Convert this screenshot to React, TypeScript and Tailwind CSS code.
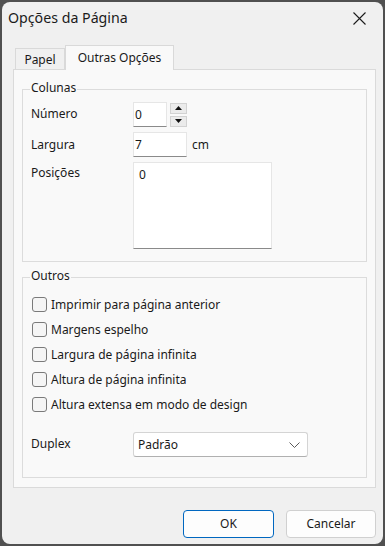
import React from "react";

function Group({ label, className, children }: { label: string; className?: string; children: React.ReactNode }) {
  return (
    <div className={`relative border border-[#dcdcdc] ${className ?? ""}`}>
      <span className="absolute -top-[10px] left-[7px] bg-[#f9f9f9] px-[1px] text-[12px] leading-[16px] text-[#1a1a1a]">
        {label}
      </span>
      {children}
    </div>
  );
}

function Check({ label }: { label: string }) {
  return (
    <div className="flex h-[25px] items-center">
      <div className="ml-[1px] h-[15px] w-[15px] rounded-[3px] border border-[#7a7a7a] bg-[#f5f5f5]" />
      <span className="ml-[4px] text-[12px] leading-[16px]">{label}</span>
    </div>
  );
}

export default function App() {
  return (
    <div className="h-[546px] w-[385px] overflow-hidden bg-[#505050] pl-[2px] pt-[2px] font-['Noto_Sans',sans-serif] text-[#1a1a1a]">
      <div className="flex h-[542px] w-[381px] flex-col rounded-[8px] bg-[#f0f0f0] pl-[11px] pr-[7px]">
        {/* title bar */}
        <div className="-ml-[5px] flex h-[32px] items-center justify-between pr-[5px]">
          <span className="text-[14.2px] leading-[20px] text-[#1b1b1b]">Opções da Página</span>
          <svg width="13" height="13" viewBox="0 0 13 13" className="mr-[5px]">
            <path d="M0.5 0.5 L12.5 12.5 M12.5 0.5 L0.5 12.5" stroke="#1b1b1b" strokeWidth="1.1" fill="none" />
          </svg>
        </div>

        {/* tabs */}
        <div className="mt-[11px] flex h-[24px] items-end pl-[2px]">
          <div className="flex h-[21px] w-[50px] items-center justify-center border border-b-0 border-[#d9d9d9] bg-[#f0f0f0] pt-[2px] text-[12px] leading-[16px]">
            Papel
          </div>
          <div className="relative z-10 -mb-px flex h-[25px] w-[109px] items-center justify-center border border-b-0 border-[#d9d9d9] bg-[#f9f9f9] pb-[1px] text-[12px] leading-[16px]">
            Outras Opções
          </div>
        </div>

        {/* panel */}
        <div className="flex h-[419px] w-[363px] flex-col border border-[#dadada] bg-[#f9f9f9] px-[8px] pt-[19px]">
          <Group label="Colunas" className="h-[173px] pl-[8px] pt-[12px]">
            <div className="flex flex-col gap-[5px] text-[12px] leading-[16px]">
              <div className="flex h-[25px] items-center">
                <span className="w-[102px] -mt-[2px]">Número</span>
                <div className="flex h-[25px] w-[34px] items-center border border-[#e6e6e6] border-b-[#8a8a8a] bg-white pl-[1px]">
                  0
                </div>
                <div className="ml-[3px] flex flex-col gap-[2px]">
                  <div className="flex h-[11px] w-[17px] items-center justify-center border border-[#d2d2d2] bg-[#ebebeb]">
                    <svg width="7" height="4" viewBox="0 0 7 4"><path d="M3.5 0 L7 4 L0 4 Z" fill="#111" /></svg>
                  </div>
                  <div className="flex h-[11px] w-[17px] items-center justify-center border border-[#d2d2d2] bg-[#ebebeb]">
                    <svg width="7" height="4" viewBox="0 0 7 4"><path d="M0 0 L7 0 L3.5 4 Z" fill="#111" /></svg>
                  </div>
                </div>
              </div>
              <div className="flex h-[25px] items-center">
                <span className="w-[102px]">Largura</span>
                <div className="flex h-[25px] w-[54px] items-center border border-[#e6e6e6] border-b-[#8a8a8a] bg-white pl-[1px]">
                  7
                </div>
                <span className="ml-[5px]">cm</span>
              </div>
              <div className="flex">
                <span className="w-[102px] pt-[3px]">Posições</span>
                <div className="h-[87px] w-[139px] border border-[#e6e6e6] border-b-[#8a8a8a] bg-white pl-[5px] pt-[4px]">
                  0
                </div>
              </div>
            </div>
          </Group>

          <Group label="Outros" className="mt-[15px] h-[201px] pl-[8px] pt-[14px]">
            <Check label="Imprimir para página anterior" />
            <Check label="Margens espelho" />
            <Check label="Largura de página infinita" />
            <Check label="Altura de página infinita" />
            <Check label="Altura extensa em modo de design" />
            <div className="mt-[15px] flex h-[25px] items-center text-[12px] leading-[16px]">
              <span className="w-[102px] -mt-[1px]">Duplex</span>
              <div className="flex h-[25px] w-[175px] items-center justify-between rounded-[3px] border border-[#d4d4d4] border-b-[#b0b0b0] bg-white pl-[4px] pr-[7px]">
                <span>Padrão</span>
                <svg width="11" height="6" viewBox="0 0 11 6">
                  <path d="M0.5 0.5 L5.5 5.5 L10.5 0.5" stroke="#5a5a5a" strokeWidth="1" fill="none" />
                </svg>
              </div>
            </div>
          </Group>
        </div>

        {/* buttons */}
        <div className="mt-[22px] flex w-[363px] justify-end gap-[12px] text-[12px] leading-[16px]">
          <div className="flex h-[28px] w-[91px] items-center justify-center rounded-[4px] border border-[#0067c0] bg-[#fdfdfd]">
            OK
          </div>
          <div className="flex h-[28px] w-[90px] items-center justify-center rounded-[4px] border border-[#d0d0d0] bg-[#fdfdfd]">
            Cancelar
          </div>
        </div>
      </div>
    </div>
  );
}
